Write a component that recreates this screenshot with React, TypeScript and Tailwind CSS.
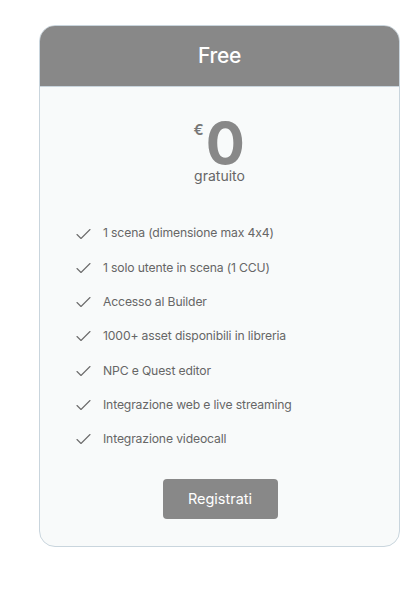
const features = [
  "1 scena (dimensione max 4x4)",
  "1 solo utente in scena (1 CCU)",
  "Accesso al Builder",
  "1000+ asset disponibili in libreria",
  "NPC e Quest editor",
  "Integrazione web e live streaming",
  "Integrazione videocall",
];

function Check() {
  return (
    <svg width="15" height="12" viewBox="0 0 15 12" fill="none" className="shrink-0">
      <path d="M1 6.5 L5 10.5 L14 1.5" stroke="#6b6b6b" strokeWidth="1.1" strokeLinecap="round" strokeLinejoin="round" />
    </svg>
  );
}

export default function App() {
  return (
    <div className="w-[420px] h-[595px] bg-white pt-[25px] pl-[39px] font-['Inter',sans-serif]">
      <div className="w-[361px] h-[522px] rounded-[16px] border border-[#c9d5dd] bg-[#f8fafa] overflow-hidden flex flex-col">
        {/* Header */}
        <div className="h-[61px] bg-[#888888] border-b border-[#c9d5dd] flex items-center justify-center">
          <span className="text-white text-[21px] font-medium tracking-[-0.3px]">Free</span>
        </div>

        {/* Price */}
        <div className="flex flex-col items-center pt-[27px]">
          <div className="flex items-start h-[53px]">
            <span className="text-[#777777] text-[15px] leading-[18px] font-semibold mt-[7px] mr-[2px]">€</span>
            <span className="text-[#888888] text-[58px] font-bold leading-[46px] mt-[6px] tracking-[0.5px]">0</span>
          </div>
          <span className="text-[#666666] text-[14px] leading-[18px]">gratuito</span>
        </div>

        {/* Features */}
        <ul className="flex flex-col gap-[15.33px] pl-[36px] mt-[39px]">
          {features.map((f) => (
            <li key={f} className="flex items-center gap-[12px] h-[19px]">
              <Check />
              <span className="text-[#666666] text-[12.2px] tracking-[-0.15px]">{f}</span>
            </li>
          ))}
        </ul>

        {/* Button */}
        <div className="flex justify-center mt-[30px] pl-[1px]">
          <button className="w-[115px] h-[40px] rounded-[4px] bg-[#888888] text-white text-[14.5px]">
            Registrati
          </button>
        </div>
      </div>
    </div>
  );
}
